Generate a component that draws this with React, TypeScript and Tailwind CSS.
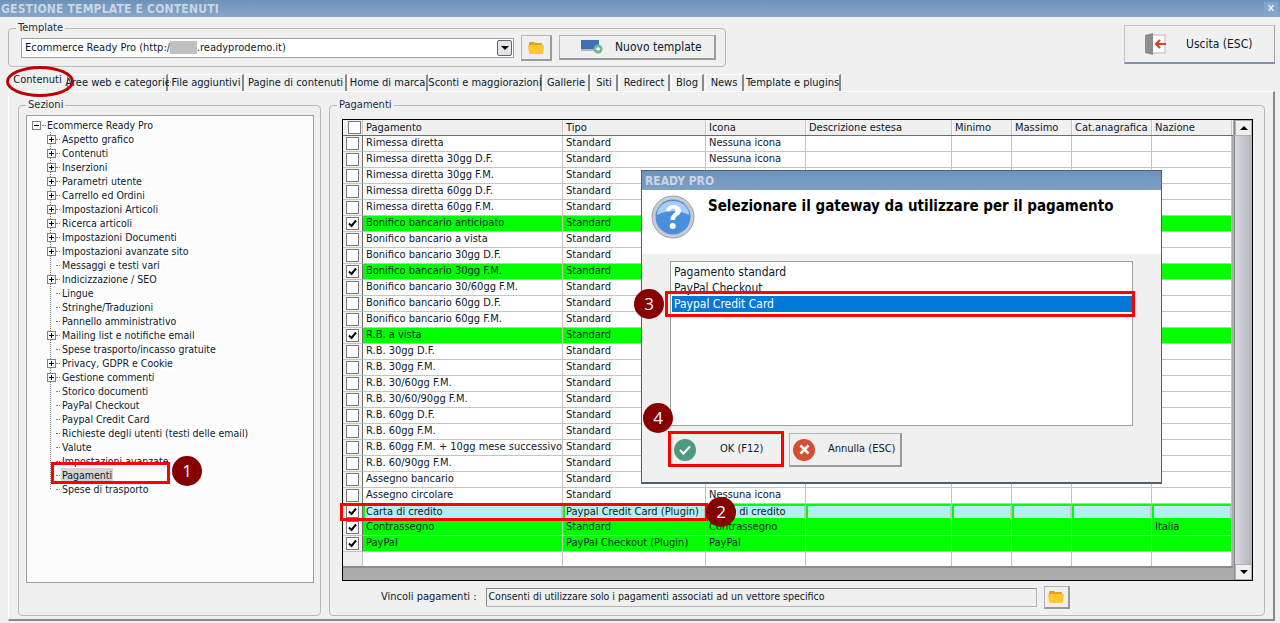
import React from "react";

const font = { fontFamily: '"DejaVu Sans Condensed","DejaVu Sans",sans-serif' };

const tree: [string, boolean][] = [
  ["Aspetto grafico", true],["Contenuti", true],["Inserzioni", true],["Parametri utente", true],["Carrello ed Ordini", true],
  ["Impostazioni Articoli", true],["Ricerca articoli", true],["Impostazioni Documenti", true],["Impostazioni avanzate sito", true],
  ["Messaggi e testi vari", false],["Indicizzazione / SEO", true],["Lingue", false],["Stringhe/Traduzioni", false],["Pannello amministrativo", false],
  ["Mailing list e notifiche email", true],["Spese trasporto/incasso gratuite", false],["Privacy, GDPR e Cookie", true],["Gestione commenti", true],
  ["Storico documenti", false],["PayPal Checkout", false],["Paypal Credit Card", false],["Richieste degli utenti (testi delle email)", false],
  ["Valute", false],["Impostazioni avanzate", false],["Pagamenti", false],["Spese di trasporto", false],
];

type Row = { n: string; t?: string; i?: string; c?: boolean; k?: "g" | "s"; na?: string };
const rows: Row[] = [
  { n: "Rimessa diretta" },{ n: "Rimessa diretta 30gg D.F." },{ n: "Rimessa diretta 30gg F.M." },{ n: "Rimessa diretta 60gg D.F." },{ n: "Rimessa diretta 60gg F.M." },
  { n: "Bonifico bancario anticipato", c: true, k: "g" },{ n: "Bonifico bancario a vista" },{ n: "Bonifico bancario 30gg D.F." },
  { n: "Bonifico bancario 30gg F.M.", c: true, k: "g" },{ n: "Bonifico bancario 30/60gg F.M." },{ n: "Bonifico bancario 60gg D.F." },{ n: "Bonifico bancario 60gg F.M." },
  { n: "R.B. a vista", c: true, k: "g" },{ n: "R.B. 30gg D.F." },{ n: "R.B. 30gg F.M." },{ n: "R.B. 30/60gg F.M." },{ n: "R.B. 30/60/90gg F.M." },{ n: "R.B. 60gg D.F." },{ n: "R.B. 60gg F.M." },
  { n: "R.B. 60gg F.M. + 10gg mese successivo" },{ n: "R.B. 60/90gg F.M." },{ n: "Assegno bancario" },{ n: "Assegno circolare" },
  { n: "Carta di credito", t: "Paypal Credit Card (Plugin)", i: "Carta di credito", c: true, k: "s" },
  { n: "Contrassegno", i: "Contrassegno", c: true, k: "g", na: "Italia" },
  { n: "PayPal", t: "PayPal Checkout (Plugin)", i: "PayPal", c: true, k: "g" },
];
const tabs: [string, string][] = [
  ["Aree web e categorie","w-[99px]"],["File aggiuntivi","w-[75px]"],["Pagine di contenuti","w-[102px]"],["Home di marca","w-[80px]"],["Sconti e maggiorazioni","w-[113px]"],
  ["Gallerie","w-[47px]"],["Siti","w-[27px]"],["Redirect","w-[51px]"],["Blog","w-[33px]"],["News","w-[39px]"],["Template e plugins","w-[96px]"],
];
const cols = "grid grid-cols-[20px_200px_143px_100px_146px_60px_60px_80px_80px]";

function Check({ on }: { on?: boolean }) {
  return (
    <span className="flex h-[13px] w-[13px] items-center justify-center border border-[#7a7a7a] bg-white">
      {on && (
        <svg width="9" height="9" viewBox="0 0 9 9"><path d="M1 4.5 3.5 7 8 1.5" fill="none" stroke="#000" strokeWidth="2" /></svg>
      )}
    </span>
  );
}
function Folder() {
  return (
    <svg width="16" height="13" viewBox="0 0 16 13">
      <path d="M1 2q0-1 1-1h4l1 1h6q1 0 1 1v1H1z" fill="#e0a020" />
      <path d="M0 5q0-1 1-1h14q1 0 1 1l-1 7q0 1-1 1H2q-1 0-1-1z" fill="#fdc72e" />
    </svg>
  );
}
function Badge({ n, pos }: { n: string; pos: string }) {
  return (
    <div className={`absolute flex h-[30px] w-[30px] items-center justify-center rounded-full bg-[#870000] text-[17px] text-white ${pos}`} style={{ fontFamily: '"Open Sans",sans-serif' }}>
      {n}
    </div>
  );
}
function Group({ label, cls, children }: { label: string; cls: string; children: React.ReactNode }) {
  return (
    <div className={`relative rounded-[4px] border border-[#b9b9b9] ${cls}`}>
      <span className="absolute left-[7px] top-[-8px] bg-[#f0f0f0] px-[2px] text-[11px] leading-[14px] text-[#1d2a3a]">{label}</span>
      {children}
    </div>
  );
}
const btn = "border border-[#b4b4b4] border-b-2 border-r-2 border-b-[#9a9a9a] border-r-[#9a9a9a] bg-[#efefef]";

export default function App() {
  return (
    <div className="relative h-[623px] w-[1280px] overflow-hidden bg-[#f0f0f0] text-[11px] text-[#0b1a2c]" style={font}>
      {/* title bar */}
      <div className="flex h-[17px] items-center justify-between bg-gradient-to-b from-[#6e93ba] to-[#86a6c9] pl-[1px] pr-[2px]">
        <span className="text-[12px] font-bold tracking-[0.2px] text-[#c9d6e4]">GESTIONE TEMPLATE E CONTENUTI</span>
        <span className="flex h-[13px] w-[14px] items-center justify-center bg-[#86a6c9] text-[11px] font-bold leading-none text-white">✕</span>
      </div>

      {/* top zone */}
      <div className="flex h-[55px] items-start justify-between pl-[8px] pr-[5px]">
        <Group label="Template" cls="mt-[11px] flex h-[39px] w-[288px] min-w-[718px] items-center pl-[12px]">
          <div className="mt-[1px] flex h-[20px] w-[493px] items-center justify-between border border-[#9f9f9f] bg-white pl-[3px] pr-[1px]">
            <span className="whitespace-nowrap">Ecommerce Ready Pro (http:/<span className="bg-[#c0c0c0] text-[#c0c0c0]">/xxxx</span>.readyprodemo.it)</span>
            <span className={`flex h-[16px] w-[15px] items-center justify-center rounded-[2px] border border-[#666] bg-[#e4e4ea]`}>
              <span className="h-0 w-0 border-x-[4px] border-t-[4px] border-x-transparent border-t-black" />
            </span>
          </div>
          <div className={`ml-[7px] flex h-[26px] w-[31px] items-center justify-center ${btn}`}><Folder /></div>
          <div className={`ml-[7px] flex h-[25px] w-[157px] items-center pl-[21px] ${btn}`}>
            <svg width="22" height="14" viewBox="0 0 22 14">
              <rect x="0" y="0" width="18" height="9" fill="#3f70b0" />
              <rect x="0" y="9" width="14" height="2" fill="#a8b8c8" />
              <circle cx="17" cy="9" r="4.5" fill="#6fb59a" />
              <path d="M15 9h4M17 7v4" stroke="#fff" strokeWidth="1.3" />
            </svg>
            <span className="ml-[12px] text-[12px]">Nuovo template</span>
          </div>
        </Group>
        <div className="mt-[8px] flex h-[39px] w-[151px] items-center border border-[#c4c4c4] border-b-2 border-b-[#7d92ad] border-r-[#a0a0a0] pl-[20px]">
          <svg width="22" height="22" viewBox="0 0 22 22">
            <rect x="6" y="2" width="14" height="18" fill="#fff" stroke="#b5b5b5" />
            <path d="M0 2 8 0v22l-8-2z" fill="#8c8f92" />
            <path d="M21 11H11M15 7l-4 4 4 4" fill="none" stroke="#d0432c" strokeWidth="2.2" />
          </svg>
          <span className="ml-[19px] text-[12px]">Uscita (ESC)</span>
        </div>
      </div>

      {/* tabs */}
      <div className="flex h-[19px] items-end pl-[8px]">
        <div className="flex h-[19px] w-[60px] items-center justify-center border-r border-[#8a8a8a] pb-[3px]">Contenuti</div>
        {tabs.map(([t, w]) => (
          <div key={t} className={`ml-[1px] flex h-[17px] items-center justify-center whitespace-nowrap border-l border-t border-r-2 border-l-white border-t-white border-r-[#8a8a8a] ${w}`}>{t}</div>
        ))}
      </div>

      {/* tab page */}
      <div className="ml-[8px] mr-[5px] flex h-[530px] gap-[8px] border-r-2 border-b-2 border-t border-l border-t-white border-l-white border-r-[#8a8a8a] border-b-[#8a8a8a] pl-[9px] pt-[13px]">
        <Group label="Sezioni" cls="h-[511px] w-[303px] pl-[7px] pt-[9px]">
          <div className="h-[468px] w-[288px] border border-[#a0a0a0] bg-[#fcfcfc] pt-[2px] leading-[14px] text-[10.5px]">
            <div className="flex h-[14px] items-center pl-[5px]">
              <span className="flex h-[9px] w-[9px] items-center justify-center border border-[#808080] bg-white text-[0px]"><span className="h-[1px] w-[5px] bg-black" /></span>
              <span className="ml-[1px] w-[4px] border-t border-dotted border-[#808080]" />
              <span className="ml-[1px] bg-white text-[#0b1a2c]">Ecommerce Ready Pro</span>
            </div>
            <div className="relative">
              <span className="absolute bottom-[7px] left-[23px] top-0 border-l border-dotted border-[#808080]" />
              {tree.map(([t, plus]) => (
                <div key={t} className="relative flex h-[14px] items-center pl-[20px]">
                  {plus ? (
                    <span className="relative flex h-[9px] w-[9px] items-center justify-center border border-[#808080] bg-white">
                      <span className="absolute h-[1px] w-[5px] bg-black" />
                      <span className="absolute h-[5px] w-[1px] bg-black" />
                    </span>
                  ) : (
                    <span className="ml-[4px] w-[5px]" />
                  )}
                  <span className="w-[4px] border-t border-dotted border-[#808080]" />
                  <span className={`ml-[1px] whitespace-nowrap px-[1px] ${t === "Pagamenti" ? "bg-[#d4d4d4]" : "bg-white"}`}>{t}</span>
                </div>
              ))}
            </div>
          </div>
        </Group>

        <Group label="Pagamenti" cls="h-[511px] w-[936px] pl-[12px] pt-[13px]">
          <div className="flex h-[462px] w-[911px] border border-black bg-[#ababab]">
            <div className="w-[891px]">
              <div className={`${cols} h-[16px] border-b border-[#6c6c6c] bg-[#f0f0f0]`}>
                {["", "Pagamento", "Tipo", "Icona", "Descrizione estesa", "Minimo", "Massimo", "Cat.anagrafica", "Nazione"].map((h, i) => (
                  <div key={i} className="flex items-center border-r border-[#c4c4c4] border-l border-l-white pl-[2px] leading-[14px]">
                    {i === 0 ? <span className="ml-[2px]"><Check /></span> : h}
                  </div>
                ))}
              </div>
              {rows.map((r) => {
                const bg = r.k === "g" ? "bg-[#00ff00]" : "bg-white";
                const cells = [r.n, r.t ?? "Standard", r.i ?? "Nessuna icona", "", "", "", "", r.na ?? ""];
                return (
                  <div key={r.n} className={`${cols} h-[16px]`}>
                    <div className="flex items-center justify-center border-b border-r border-[#6c6c6c] border-b-[#c4c4c4] bg-[#f0f0f0]"><Check on={r.c} /></div>
                    {cells.map((c, i) =>
                      r.k === "s" ? (
                        <div key={i} className="flex items-center overflow-hidden whitespace-nowrap border-2 border-[#00ff00] border-r-[#c4c4c4] bg-[#b3eef0] pl-[1px]">{c}</div>
                      ) : (
                        <div key={i} className={`flex items-center overflow-hidden whitespace-nowrap border-b border-r border-[#c4c4c4] pl-[3px] ${bg}`}>{c}</div>
                      )
                    )}
                  </div>
                );
              })}
              <div className={`${cols} h-[16px] border-b-2 border-[#8c8c8c]`}>
                {Array.from({ length: 9 }).map((_, i) => (
                  <div key={i} className={`border-r border-[#c4c4c4] ${i === 0 ? "bg-[#f0f0f0]" : "bg-white"}`} />
                ))}
              </div>
            </div>
            <div className="ml-[1px] flex w-[18px] flex-col border-l border-[#8c8c8c] bg-[#e8e8e8]">
              <div className="flex h-[16px] items-center justify-center border border-[#b0b0b0] bg-[#efefef]">
                <span className="h-0 w-0 border-x-[4px] border-b-[4px] border-x-transparent border-b-black" />
              </div>
              <div className="flex-1 bg-gradient-to-r from-[#d8d8e0] to-[#b4b4bc]" />
              <div className="flex h-[16px] items-center justify-center border border-[#b0b0b0] bg-[#efefef]">
                <span className="h-0 w-0 border-x-[4px] border-t-[4px] border-x-transparent border-t-black" />
              </div>
            </div>
          </div>
          <div className="mt-[6px] flex h-[20px] items-center pl-[39px]">
            <span className="text-[11px]">Vincoli pagamenti :</span>
            <div className="ml-[9px] flex h-[19px] w-[551px] items-center border border-[#b4b4b4] border-l-[#8a8a8a] border-t-[#8a8a8a] pl-[2px] text-[10.5px]">Consenti di utilizzare solo i pagamenti associati ad un vettore specifico</div>
            <div className={`ml-[7px] flex h-[23px] w-[26px] items-center justify-center ${btn}`}><Folder /></div>
          </div>
        </Group>
      </div>

      {/* dialog */}
      <div className="absolute left-[641px] top-[170px] flex h-[314px] w-[521px] flex-col border border-[#4d5f73] border-r-[#4d5f73] border-b-2 bg-[#f0f0f0]">
        <div className="flex h-[19px] items-center bg-gradient-to-b from-[#6e93ba] to-[#7d9fc4] pl-[3px] text-[12px] font-bold text-[#c9d6e4]">READY PRO</div>
        <div className="flex h-[64px] bg-white pl-[9px] pt-[5px]">
          <svg width="44" height="44" viewBox="0 0 44 44">
            <circle cx="22" cy="22" r="21" fill="#c6ccd2" stroke="#9aa0a6" />
            <circle cx="22" cy="22" r="17.5" fill="#4a8fdb" />
            <path d="M6 20a16 14 0 0 1 32 0q-16-8-32 0z" fill="#a9cdf2" />
            <path d="M15 16q1-6 7.500-6T30 15.500q0 3.500-4 5.500-2 1-2 4h-4.500q0-4 2.500-6 2.500-1.500 2.500-3.500t-2.500-2q-2.500 0-3 3z" fill="#fff" />
            <circle cx="21.700" cy="31" r="3" fill="#fff" />
          </svg>
          <span className="ml-[13px] mt-[1px] text-[15px] font-bold leading-[20px] text-black" style={{ fontFamily: '"DejaVu Sans Condensed",sans-serif' }}>Selezionare il gateway da utilizzare per il pagamento</span>
        </div>
        <div className="ml-[28px] mt-[7px] h-[165px] w-[463px] border border-[#a0a0a0] bg-white pl-[1px] pt-[2px] text-[12px] leading-[16px]">
          <div className="pl-[2px]">Pagamento standard</div>
          <div className="pl-[2px]">PayPal Checkout</div>
          <div className="h-[16px] bg-[#0078d7] pl-[2px] text-white">Paypal Credit Card</div>
        </div>
        <div className="ml-[29px] mt-[7px] flex gap-[6px]">
          <div className="flex h-[33px] w-[112px] items-center pl-[3px]">
            <span className="flex h-[22px] w-[22px] items-center justify-center rounded-full bg-[#4d9a7c]">
              <svg width="12" height="10" viewBox="0 0 12 10"><path d="M1 5l3.500 3.500L11 1.500" fill="none" stroke="#fff" strokeWidth="2.200" /></svg>
            </span>
            <span className="ml-[24px]">OK (F12)</span>
          </div>
          <div className={`flex h-[34px] w-[113px] items-center pl-[3px] ${btn}`}>
            <span className="flex h-[22px] w-[22px] items-center justify-center rounded-full bg-[#d24f33]">
              <svg width="11" height="11" viewBox="0 0 11 11"><path d="M1.500 1.500l8 8M9.500 1.500l-8 8" stroke="#fff" strokeWidth="2.500" /></svg>
            </span>
            <span className="ml-[13px]">Annulla (ESC)</span>
          </div>
        </div>
      </div>

      {/* annotations */}
      <div className="absolute left-[6px] top-[66px] h-[31px] w-[68px] rounded-[50%] border-[3px] border-[#c00000]" />
      <div className="absolute left-[51px] top-[462px] h-[22px] w-[119px] border-[3px] border-[#ff0000]" />
      <div className="absolute left-[340px] top-[503px] h-[18px] w-[368px] border-[3px] border-[#ff0000]" />
      <div className="absolute left-[665px] top-[291px] h-[26px] w-[470px] border-[3px] border-[#ff0000]" />
      <div className="absolute left-[668px] top-[431px] h-[36px] w-[116px] border-[3px] border-[#ff0000]" />
      <Badge n="1" pos="left-[172px] top-[456px]" />
      <Badge n="2" pos="left-[706px] top-[497px]" />
      <Badge n="3" pos="left-[634px] top-[289px]" />
      <Badge n="4" pos="left-[643px] top-[403px]" />
    </div>
  );
}
